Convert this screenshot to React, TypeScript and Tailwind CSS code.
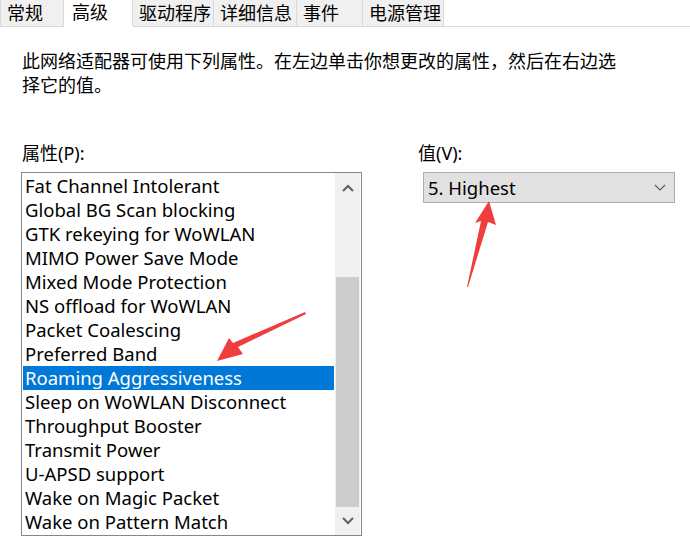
const tabs = [
  { label: '常规', w: 'w-[64px]' },
  { label: '高级', w: 'w-[69px]', active: true },
  { label: '驱动程序', w: 'w-[82px]' },
  { label: '详细信息', w: 'w-[84px]' },
  { label: '事件', w: 'w-[67px]' },
  { label: '电源管理', w: 'w-[82px]' },
];

const properties = [
  'Fat Channel Intolerant',
  'Global BG Scan blocking',
  'GTK rekeying for WoWLAN',
  'MIMO Power Save Mode',
  'Mixed Mode Protection',
  'NS offload for WoWLAN',
  'Packet Coalescing',
  'Preferred Band',
  'Roaming Aggressiveness',
  'Sleep on WoWLAN Disconnect',
  'Throughput Booster',
  'Transmit Power',
  'U-APSD support',
  'Wake on Magic Packet',
  'Wake on Pattern Match',
];

const selected = 'Roaming Aggressiveness';

const App = () => {
  return (
    <div className="relative w-[690px] h-[547px] overflow-hidden bg-white text-[18px] text-black font-['Noto_Sans','Noto_Sans_CJK_SC',sans-serif]">
      {/* Tab strip */}
      <div className="flex h-[27px] border-b border-[#d9d9d9]">
        {tabs.map((t) =>
          t.active ? (
            <div
              key={t.label}
              className={`${t.w} h-[27px] -mb-px bg-white pl-[8px] leading-[24px] shrink-0`}
            >
              {t.label}
            </div>
          ) : (
            <div
              key={t.label}
              className={`${t.w} h-[26px] bg-[#f0f0f0] border-x border-[#d9d9d9] -ml-px first:ml-0 pl-[6px] leading-[26px] shrink-0`}
            >
              {t.label}
            </div>
          )
        )}
      </div>

      {/* Description */}
      <p className="mt-[22px] ml-[22px] w-[600px] leading-[24px]">
        此网络适配器可使用下列属性。在左边单击你想更改的属性，然后在右边选择它的值。
      </p>

      {/* Property / value columns */}
      <div className="flex mt-[44px]">
        <div className="ml-[21px] w-[341px]">
          <div className="pl-px leading-[24px]">属性(P):</div>
          <div className="mt-[7px] h-[364px] border border-[#828790] flex">
            <div className="flex-1 p-px text-[18.5px]">
              {properties.map((p) => (
                <div
                  key={p}
                  className={`h-[24px] leading-[24px] pl-[2px] whitespace-nowrap ${
                    p === selected ? 'bg-[#0078d7] text-white' : ''
                  }`}
                >
                  {p}
                </div>
              ))}
            </div>
            <div className="w-[25px] mr-px flex flex-col bg-[#f0f0f0]">
              <div className="h-[30px] flex items-center justify-center">
                <svg width="12" height="8" viewBox="0 0 12 8">
                  <path d="M1 7 L6 2 L11 7" fill="none" stroke="#606060" strokeWidth="2" />
                </svg>
              </div>
              <div className="h-[74px]" />
              <div className="h-[230px] mx-[1px] bg-[#cdcdcd]" />
              <div className="flex-1 flex items-center justify-center">
                <svg width="12" height="8" viewBox="0 0 12 8">
                  <path d="M1 1 L6 6 L11 1" fill="none" stroke="#606060" strokeWidth="2" />
                </svg>
              </div>
            </div>
          </div>
        </div>

        <div className="ml-[56px] w-[257px]">
          <div className="leading-[24px]">值(V):</div>
          <div className="mt-[7px] ml-[5px] h-[31px] w-[252px] bg-[#e1e1e1] border border-[#adadad] flex items-center justify-between pl-[4px] pr-[8px]">
            <span className="text-[18.5px]">5. Highest</span>
            <svg width="12" height="7" viewBox="0 0 12 7">
              <path d="M1 1 L6 6 L11 1" fill="none" stroke="#606060" strokeWidth="1.2" />
            </svg>
          </div>
        </div>
      </div>

      {/* Red annotation arrows */}
      <svg className="absolute inset-0 pointer-events-none" width="690" height="547" viewBox="0 0 690 547">
        <path d="M306 314 L238 347 L243 354 L217 361 L229 338 L233 343 L305 312 Z" fill="#f03e3e" />
        <path d="M467 287 L481 221 L475 223 L489 201 L496 225 L488 222 L468 287 Z" fill="#f03e3e" />
      </svg>
    </div>
  );
};

export default App;
